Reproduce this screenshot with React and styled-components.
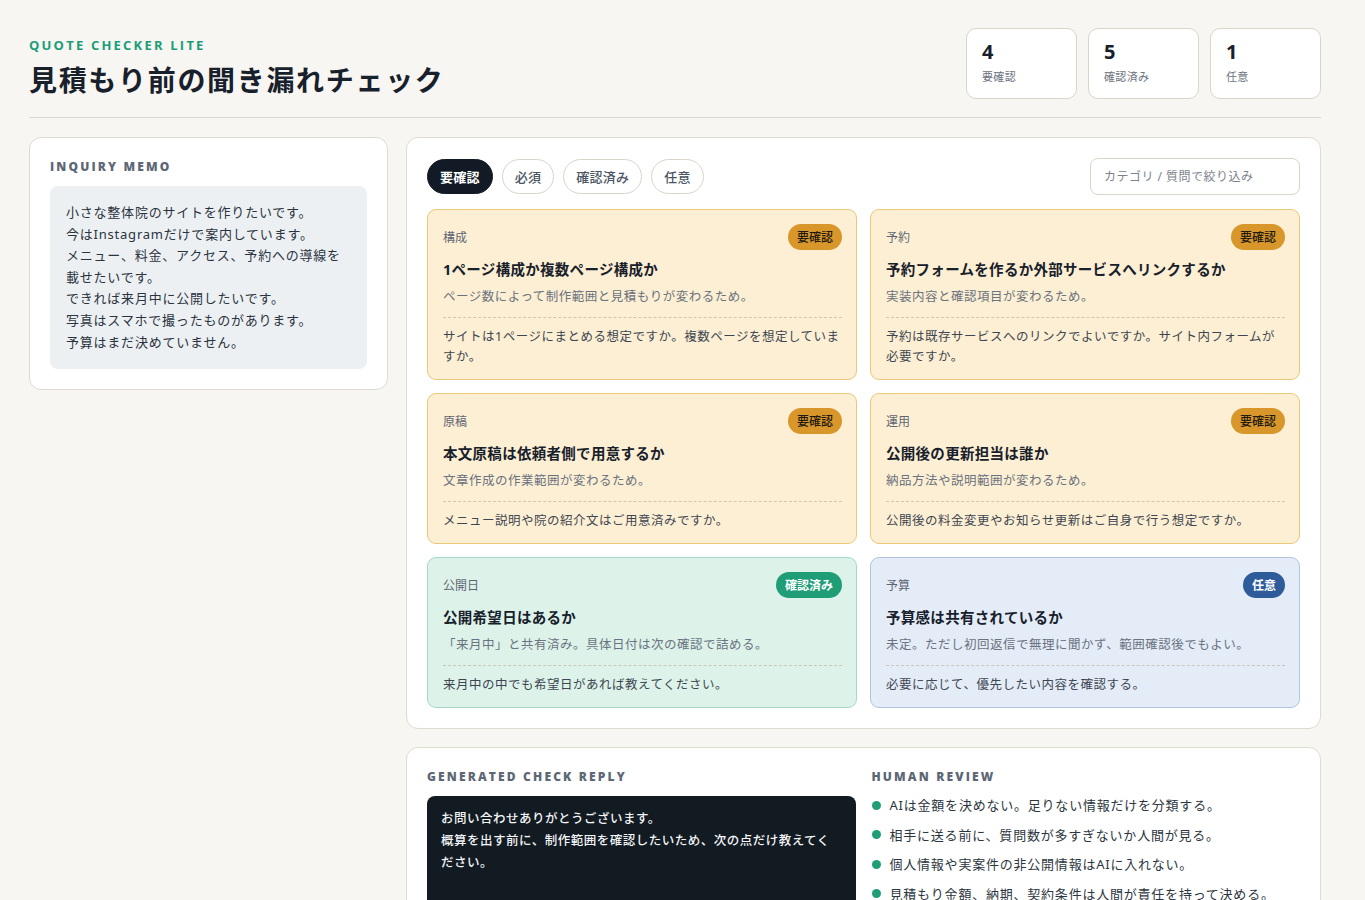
import React from "react";
import styled, { createGlobalStyle } from "styled-components";

const GlobalStyle = createGlobalStyle`
* { box-sizing: border-box; }
body {
  margin: 0;
  background: #f7f6f2;
  color: #17202b;
  font-family: "Noto Sans", "Noto Sans CJK JP", sans-serif;
}
`;

const stats = [
    { value: 4, label: "要確認" },
    { value: 5, label: "確認済み" },
    { value: 1, label: "任意" },
];

const tabs = ["要確認", "必須", "確認済み", "任意"];

const checks = [
    {
        category: "構成",
        status: "todo",
        title: "1ページ構成か複数ページ構成か",
        reason: "ページ数によって制作範囲と見積もりが変わるため。",
        question: "サイトは1ページにまとめる想定ですか。複数ページを想定していますか。",
    },
    {
        category: "予約",
        status: "todo",
        title: "予約フォームを作るか外部サービスへリンクするか",
        reason: "実装内容と確認項目が変わるため。",
        question: "予約は既存サービスへのリンクでよいですか。サイト内フォームが必要ですか。",
    },
    {
        category: "原稿",
        status: "todo",
        title: "本文原稿は依頼者側で用意するか",
        reason: "文章作成の作業範囲が変わるため。",
        question: "メニュー説明や院の紹介文はご用意済みですか。",
    },
    {
        category: "運用",
        status: "todo",
        title: "公開後の更新担当は誰か",
        reason: "納品方法や説明範囲が変わるため。",
        question: "公開後の料金変更やお知らせ更新はご自身で行う想定ですか。",
    },
    {
        category: "公開日",
        status: "done",
        title: "公開希望日はあるか",
        reason: "「来月中」と共有済み。具体日付は次の確認で詰める。",
        question: "来月中の中でも希望日があれば教えてください。",
    },
    {
        category: "予算",
        status: "optional",
        title: "予算感は共有されているか",
        reason: "未定。ただし初回返信で無理に聞かず、範囲確認後でもよい。",
        question: "必要に応じて、優先したい内容を確認する。",
    },
];

const statusLabel = { todo: "要確認", done: "確認済み", optional: "任意" };

const tone = {
    todo: { bg: "#fdefd3", border: "#ebc778", badge: "#d8962b", badgeText: "#1f1a12", weight: 500 },
    done: { bg: "#ddf3ea", border: "#a6d9c3", badge: "#1f9d77", badgeText: "#ffffff", weight: 700 },
    optional: { bg: "#e4ecf8", border: "#b1c4df", badge: "#2e5c9b", badgeText: "#ffffff", weight: 700 },
};

const memo = `小さな整体院のサイトを作りたいです。
今はInstagramだけで案内しています。
メニュー、料金、アクセス、予約への導線を載せたいです。
できれば来月中に公開したいです。
写真はスマホで撮ったものがあります。
予算はまだ決めていません。`;

const reply = `お問い合わせありがとうございます。
概算を出す前に、制作範囲を確認したいため、次の点だけ教えてください。

1. サイトは1ページにまとめる想定ですか。複数ページを想定していますか。
2. 予約は既存サービスへのリンクでよいですか。サイト内フォームが必要ですか。
3. メニュー説明や院の紹介文はご用意済みですか。
4. 公開後の料金変更やお知らせ更新はご自身で行う想定ですか。

確認でき次第、概算をお送りします。`;

const reviews = [
    "AIは金額を決めない。足りない情報だけを分類する。",
    "相手に送る前に、質問数が多すぎないか人間が見る。",
    "個人情報や実案件の非公開情報はAIに入れない。",
    "見積もり金額、納期、契約条件は人間が責任を持って決める。",
];

const App = () => {
    return (
        <>
            <GlobalStyle />
            <Page>
                <Header>
                    <TitleBlock>
                        <Eyebrow>QUOTE CHECKER LITE</Eyebrow>
                        <Title>見積もり前の聞き漏れチェック</Title>
                    </TitleBlock>
                    <Stats>
                        {stats.map((s) => (
                            <StatCard key={s.label}>
                                <StatValue>{s.value}</StatValue>
                                <StatLabel>{s.label}</StatLabel>
                            </StatCard>
                        ))}
                    </Stats>
                </Header>

                <Layout>
                    <Panel>
                        <SectionLabel>INQUIRY MEMO</SectionLabel>
                        <Memo>{memo}</Memo>
                    </Panel>

                    <RightColumn>
                        <Panel>
                            <Toolbar>
                                <Tabs>
                                    {tabs.map((t, i) => (
                                        <Tab key={t} $active={i === 0}>{t}</Tab>
                                    ))}
                                </Tabs>
                                <Search placeholder="カテゴリ / 質問で絞り込み" />
                            </Toolbar>
                            <CardGrid>
                                {checks.map((c) => (
                                    <Card key={c.title} $status={c.status}>
                                        <CardHead>
                                            <Category>{c.category}</Category>
                                            <Badge $status={c.status}>{statusLabel[c.status]}</Badge>
                                        </CardHead>
                                        <CardTitle>{c.title}</CardTitle>
                                        <Reason>{c.reason}</Reason>
                                        <Question>{c.question}</Question>
                                    </Card>
                                ))}
                            </CardGrid>
                        </Panel>

                        <Panel>
                            <Split>
                                <div>
                                    <SectionLabel>GENERATED CHECK REPLY</SectionLabel>
                                    <Reply>{reply}</Reply>
                                </div>
                                <div>
                                    <SectionLabel>HUMAN REVIEW</SectionLabel>
                                    <ReviewList>
                                        {reviews.map((r) => (
                                            <ReviewItem key={r}>{r}</ReviewItem>
                                        ))}
                                    </ReviewList>
                                </div>
                            </Split>
                        </Panel>
                    </RightColumn>
                </Layout>
            </Page>
        </>
    );
};

const Page = styled.div`
max-width: 1350px;
padding: 28px 29px 40px;
`;

const Header = styled.header`
display: flex;
justify-content: space-between;
align-items: flex-start;
padding-bottom: 17px;
border-bottom: 1px solid #dcd8cf;
`;

const TitleBlock = styled.div`
padding-top: 8px;
`;

const Eyebrow = styled.div`
font-family: "Open Sans", "Noto Sans", sans-serif;
font-size: 13px;
font-weight: 700;
letter-spacing: 0.17em;
color: #1a9d78;
line-height: 18px;
`;

const Title = styled.h1`
margin: 6px 0 0;
font-size: 28px;
font-weight: 700;
letter-spacing: 0.06em;
line-height: 40px;
`;

const Stats = styled.div`
display: flex;
gap: 11px;
`;

const StatCard = styled.div`
width: 111px;
height: 71px;
background: #fff;
border: 1px solid #dad5ca;
border-radius: 10px;
padding: 11px 15px;
`;

const StatValue = styled.div`
font-size: 20px;
font-weight: 700;
line-height: 24px;
`;

const StatLabel = styled.div`
margin-top: 4px;
font-size: 11px;
letter-spacing: 0.03em;
color: #6b7280;
`;

const Layout = styled.div`
display: grid;
grid-template-columns: 359px 1fr;
gap: 18px;
margin-top: 19px;
align-items: start;
`;

const RightColumn = styled.div`
display: flex;
flex-direction: column;
gap: 18px;
`;

const Panel = styled.section`
background: #fff;
border: 1px solid #e0dbd0;
border-radius: 12px;
padding: 20px;
`;

const SectionLabel = styled.h2`
margin: 0;
font-family: "Open Sans", "Noto Sans", sans-serif;
font-size: 12px;
font-weight: 800;
letter-spacing: 0.18em;
line-height: 18px;
color: #5d6775;
`;

const Memo = styled.div`
margin-top: 10px;
background: #edf0f3;
border-radius: 8px;
padding: 16px;
font-size: 13px;
letter-spacing: 0.06em;
line-height: 21.6px;
color: #2a333e;
white-space: pre-wrap;
`;

const Toolbar = styled.div`
display: flex;
justify-content: space-between;
align-items: center;
`;

const Tabs = styled.div`
display: flex;
gap: 9px;
`;

const Tab = styled.button`
height: 35px;
padding: 0 12px;
border-radius: 18px;
border: 1px solid ${(p) => (p.$active ? "#121b25" : "#dad5ca")};
background: ${(p) => (p.$active ? "#121b25" : "#fff")};
color: ${(p) => (p.$active ? "#fff" : "#4b5563")};
font-family: inherit;
font-size: 13px;
font-weight: ${(p) => (p.$active ? 700 : 500)};
letter-spacing: 0.02em;
`;

const Search = styled.input`
width: 210px;
height: 37px;
border: 1px solid #dad5ca;
border-radius: 8px;
padding: 0 13px;
font-family: inherit;
font-size: 12px;
letter-spacing: 0.04em;
color: #17202b;
outline: none;
&::placeholder { color: #7c828c; }
`;

const CardGrid = styled.div`
display: grid;
grid-template-columns: 1fr 1fr;
gap: 13px;
margin-top: 14px;
`;

const Card = styled.article`
background: ${(p) => tone[p.$status].bg};
border: 1px solid ${(p) => tone[p.$status].border};
border-radius: 9px;
padding: 14px 14px 12px 15px;
`;

const CardHead = styled.div`
display: flex;
justify-content: space-between;
align-items: center;
`;

const Category = styled.span`
font-size: 12px;
color: #5d6673;
`;

const Badge = styled.span`
height: 26px;
padding: 0 9px;
border-radius: 13px;
display: inline-flex;
align-items: center;
background: ${(p) => tone[p.$status].badge};
color: ${(p) => tone[p.$status].badgeText};
font-size: 12px;
font-weight: ${(p) => tone[p.$status].weight};
`;

const CardTitle = styled.h3`
margin: 8px 0 0;
font-size: 14.5px;
font-weight: 700;
letter-spacing: 0.02em;
line-height: 22px;
`;

const Reason = styled.p`
margin: 7px 0 0;
padding-bottom: 10px;
border-bottom: 1px dashed #cdc6b8;
font-size: 12.5px;
letter-spacing: 0.04em;
line-height: 20px;
color: #6b7280;
`;

const Question = styled.p`
margin: 0;
padding-top: 9px;
font-size: 12.5px;
letter-spacing: 0.04em;
line-height: 20px;
color: #3d4652;
`;

const Split = styled.div`
display: grid;
grid-template-columns: 1fr 1fr;
gap: 16px;
`;

const Reply = styled.div`
margin-top: 10px;
background: #121a22;
color: #f3f5f7;
border-radius: 8px;
padding: 12px 14px 16px;
font-size: 12.5px;
font-weight: 500;
letter-spacing: 0.04em;
line-height: 22px;
white-space: pre-wrap;
`;

const ReviewList = styled.ul`
list-style: none;
margin: 8px 0 0;
padding: 0;
display: flex;
flex-direction: column;
gap: 7.5px;
`;

const ReviewItem = styled.li`
display: flex;
align-items: center;
gap: 9px;
font-size: 13px;
letter-spacing: 0.06em;
line-height: 22px;
color: #2d3640;
&::before {
    content: "";
    width: 9px;
    height: 9px;
    border-radius: 50%;
    background: #1f9d77;
    flex-shrink: 0;
}
`;

export default App;
